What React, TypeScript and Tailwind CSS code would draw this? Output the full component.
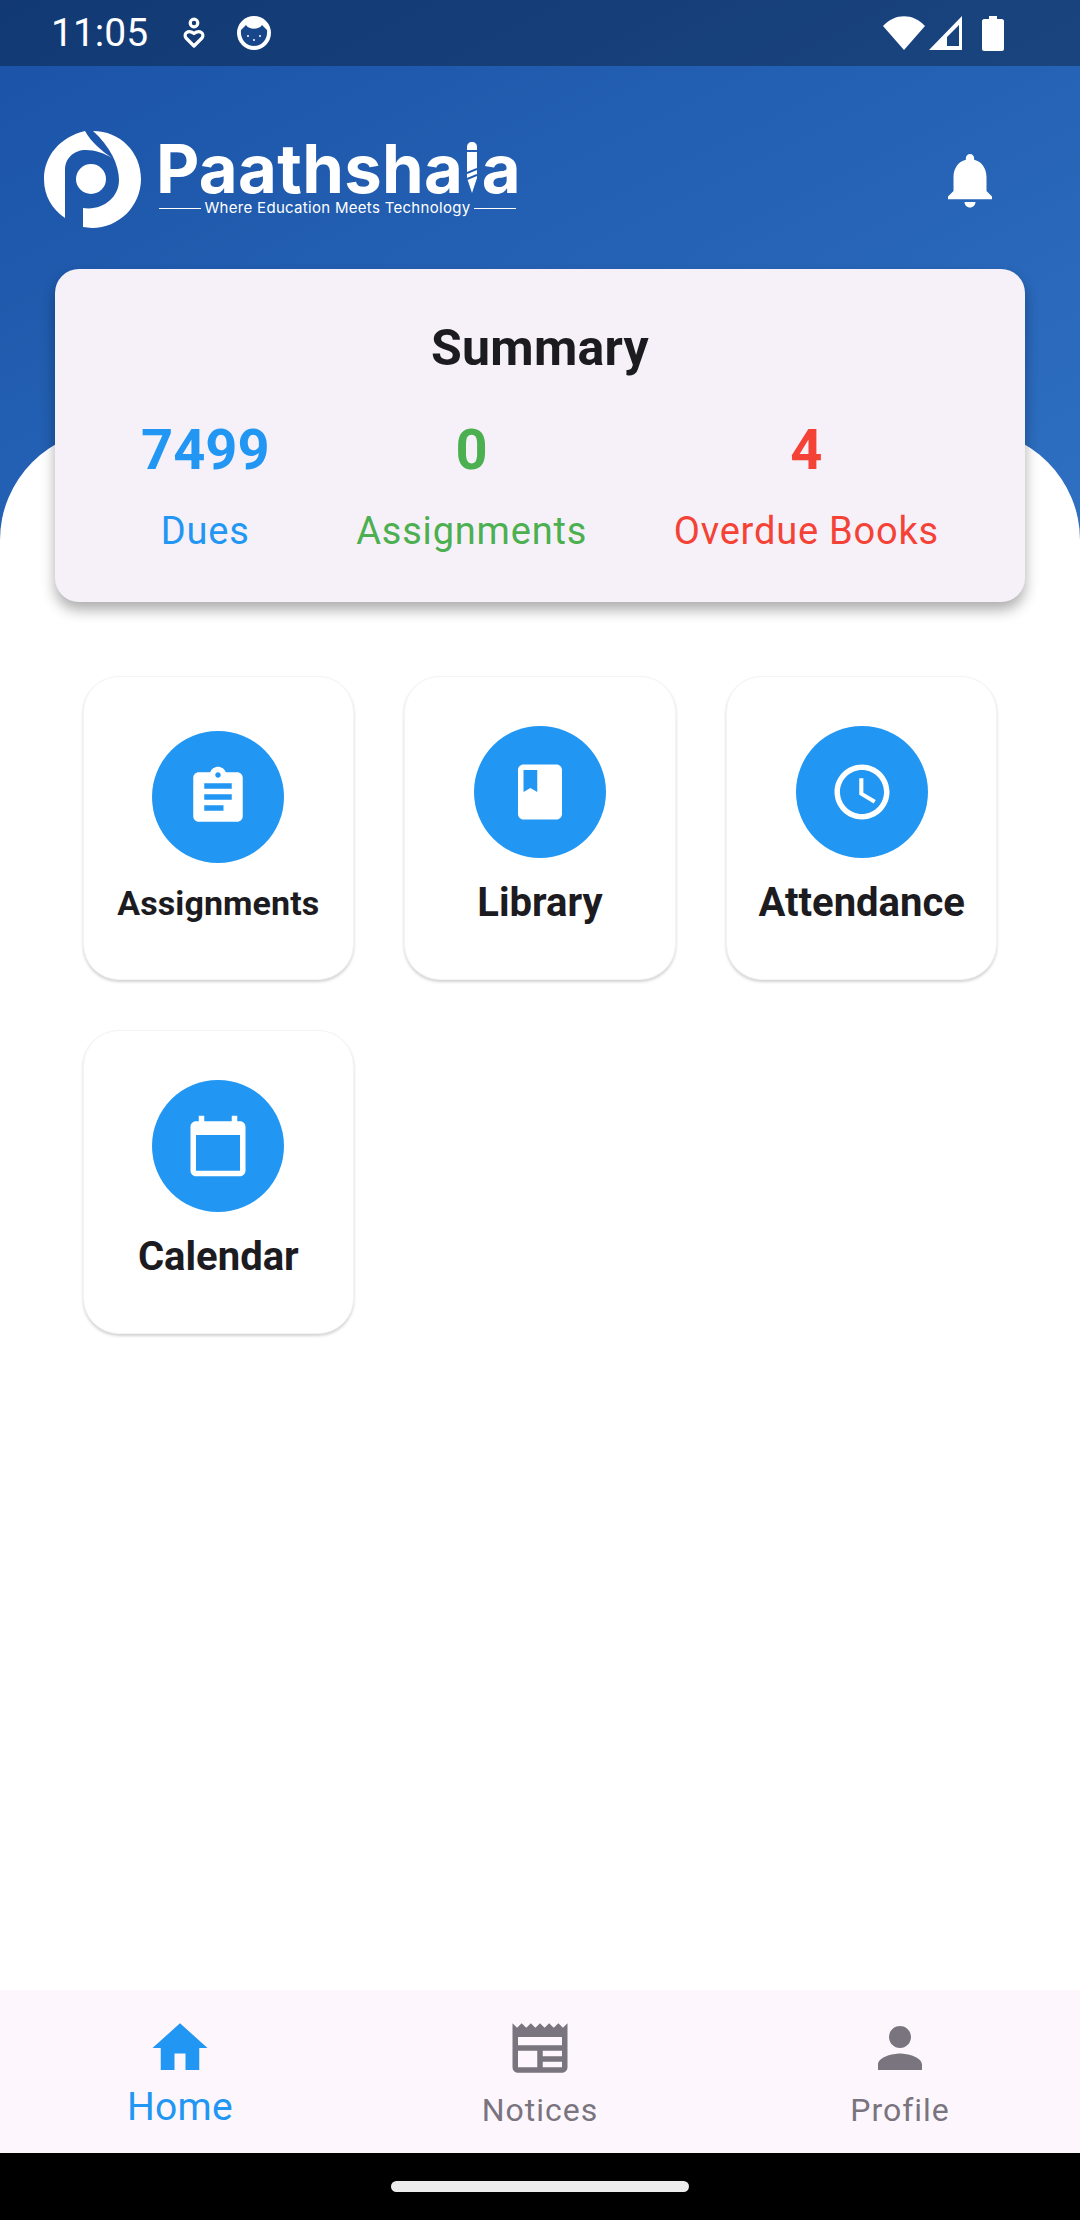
const Logo = () => (
  <div className="flex items-start">
    <svg width="98" height="98" viewBox="0 0 98 98" className="mr-[17px]">
      <path
        fill="white"
        d="M41 0 C16 6 0 25 0 48 C0 65 8 78 21 87 V39 C21 27 30 19 42 19 C51 19 60 22 68 27 C58 20 47 11 41 0 Z"
      />
      <path
        fill="white"
        d="M49 0 C76 0 97 21 97 48 C97 75 75 97 48 97 L39 96 V77 C58 80 75 67 75 49 C75 34 66 15 49 0 Z"
      />
      <circle cx="47" cy="48" r="15" fill="white" />
    </svg>
    <div className="flex flex-col w-[357px] mt-[10px]">
      <span className="-ml-[3px] text-[67px] leading-[56px] h-[56px] font-bold text-white font-['Inter',sans-serif] tracking-[0.3px] whitespace-nowrap">
        Paathsha
        <span className="relative inline-block text-transparent">
          l
          {/* le stylo qui remplace le l du logo */}
          <svg width="10" height="51" viewBox="0 0 10 51" className="absolute top-[1px] left-[4px]">
            <path fill="white" d="M0 5 C0 2 2 0 5 0 C8 0 10 2 10 5 V8 H0 Z" />
            <path fill="white" d="M0 10 H10 V36 L5 51 L0 36 Z" />
            <path stroke="#1c58ac" strokeWidth="2" d="M0 31 L10 27 M0 37 L10 33" />
          </svg>
        </span>
        a
      </span>
      <div className="flex items-center gap-[4px] mt-[3px]">
        <div className="flex-1 h-px bg-white" />
        <span className="text-[15px] leading-[16px] text-white font-['Inter',sans-serif] font-normal tracking-[0.3px] whitespace-nowrap">
          Where Education Meets Technology
        </span>
        <div className="flex-1 h-px bg-white" />
      </div>
    </div>
  </div>
);

const StatusBar = () => (
  <div className="h-[66px] bg-black/30 flex items-center pl-[51px] pr-[76px] text-white">
    <span className="text-[39px] font-normal font-['Roboto',sans-serif] w-[131px]">11:05</span>
    <svg width="24" height="32" viewBox="0 0 24 32" fill="none" stroke="white" strokeWidth="3.2">
      <circle cx="12" cy="6" r="3.8" />
      <path d="M12 29 L4 21 C1 17 6 12 12 16.5 C18 12 23 17 20 21 Z" strokeLinejoin="round" />
    </svg>
    <svg width="34" height="34" viewBox="0 0 34 34" className="ml-[31px]">
      <circle cx="17" cy="17" r="17" fill="white" />
      <path fill="#17468a" d="M4 14 L9 9 C12 14 22 14 25 9 L30 14 C31 23 25 30 17 30 C9 30 3 23 4 14 Z" />
      <circle cx="11" cy="20" r="1" fill="white" />
      <circle cx="17" cy="24" r="1" fill="white" />
      <circle cx="23" cy="20" r="1" fill="white" />
    </svg>
    <div className="ml-auto flex items-center">
      <svg width="42" height="34" viewBox="0 0 42 34">
        <path fill="white" d="M0 10 C12 -3 30 -3 42 10 L21 34 Z" />
      </svg>
      <svg width="33" height="34" viewBox="0 0 33 34" className="ml-[4px]">
        <path fill="white" fillRule="evenodd" d="M0 34 L33 0 V34 Z M18 30 H30 V9 L18 21 Z" />
      </svg>
      <svg width="22" height="35" viewBox="0 0 22 35" className="ml-[20px]">
        <path fill="white" d="M7 0 H15 V3 H20 C21 3 22 4 22 5 V33 C22 34 21 35 20 35 H2 C1 35 0 34 0 33 V5 C0 4 1 3 2 3 H7 Z" />
      </svg>
    </div>
  </div>
);

const Stat = ({ value, label, color }: { value: string; label: string; color: string }) => (
  <div className={`flex flex-col items-center ${color}`}>
    <span className="text-[56px] leading-[62px] font-bold">{value}</span>
    <span className="text-[38px] leading-[44px] mt-[28px] tracking-[0.8px]">{label}</span>
  </div>
);

const AssignmentIcon = () => (
  <svg viewBox="0 0 24 24" width="66" height="66" fill="white">
    <path d="M19 3h-4.18C14.4 1.84 13.3 1 12 1s-2.4.84-2.82 2H5c-1.1 0-2 .9-2 2v14c0 1.1.9 2 2 2h14c1.1 0 2-.9 2-2V5c0-1.1-.9-2-2-2zm-7 0c.55 0 1 .45 1 1s-.45 1-1 1-1-.45-1-1 .45-1 1-1zm2 14H7v-2h7v2zm3-4H7v-2h10v2zm0-4H7V7h10v2z" />
  </svg>
);

const BookIcon = () => (
  <svg viewBox="0 0 24 24" width="66" height="66" fill="white">
    <path d="M18 2H6c-1.1 0-2 .9-2 2v16c0 1.1.9 2 2 2h12c1.1 0 2-.9 2-2V4c0-1.1-.9-2-2-2zM6 4h5v8l-2.5-1.5L6 12V4z" />
  </svg>
);

const ClockIcon = () => (
  <svg viewBox="0 0 24 24" width="66" height="66" fill="white">
    <path d="M11.99 2C6.47 2 2 6.48 2 12s4.47 10 9.99 10C17.52 22 22 17.52 22 12S17.52 2 11.99 2zM12 20c-4.42 0-8-3.58-8-8s3.58-8 8-8 8 3.58 8 8-3.58 8-8 8zm.5-13H11v6l5.25 3.15.75-1.23-4.5-2.67z" />
  </svg>
);

const CalendarIcon = () => (
  <svg viewBox="0 0 24 24" width="66" height="66" fill="white">
    <path d="M20 3h-1V1h-2v2H7V1H5v2H4c-1.1 0-2 .9-2 2v16c0 1.1.9 2 2 2h16c1.1 0 2-.9 2-2V5c0-1.1-.9-2-2-2zm0 18H4V8h16v13z" />
  </svg>
);

const Tile = ({ icon, label, small }: { icon: React.ReactNode; label: string; small?: boolean }) => (
  <div className="h-[304px] rounded-[36px] bg-white border border-[#f5f4f5] shadow-[0_2px_3px_rgba(0,0,0,0.18)] flex flex-col items-center">
    <div
      className={`w-[132px] h-[132px] rounded-full bg-[#2196f3] flex items-center justify-center ${
        small ? 'mt-[54px]' : 'mt-[49px]'
      }`}
    >
      {icon}
    </div>
    <span
      className={
        small
          ? 'mt-[20px] text-[34px] leading-[40px] font-bold text-[#1c1b1f] tracking-[0.1px]'
          : 'mt-[22px] text-[40px] leading-[46px] font-bold text-[#1c1b1f]'
      }
    >
      {label}
    </span>
  </div>
);

const NavItem = ({
  icon,
  label,
  active,
}: {
  icon: React.ReactNode;
  label: string;
  active?: boolean;
}) => (
  <div className="flex-1 flex flex-col items-center">
    {icon}
    <span
      className={
        active
          ? 'text-[39px] leading-[44px] mt-[4px] text-[#2196f3] tracking-[0.3px]'
          : 'text-[32px] leading-[38px] mt-[10px] text-[#79747e] tracking-[1px]'
      }
    >
      {label}
    </span>
  </div>
);

export default function App() {
  return (
    <div className="w-[1080px] h-[2220px] flex flex-col bg-white overflow-hidden font-['Roboto',sans-serif]">
      <div className="h-[540px] bg-gradient-to-br from-[#1a52a6] to-[#2f70c2] shrink-0 flex flex-col">
        <StatusBar />
        <div className="flex items-start justify-between pl-[44px] pr-[77px] pt-[65px]">
          <Logo />
          <svg viewBox="0 0 24 24" width="66" height="66" fill="white" className="-mt-[1px] translate-y-[17px]">
            <path d="M12 22c1.1 0 2-.9 2-2h-4c0 1.1.89 2 2 2zm6-6v-5c0-3.07-1.64-5.64-4.5-6.32V4c0-.83-.67-1.5-1.5-1.5s-1.5.67-1.5 1.5v.68C7.63 5.36 6 7.92 6 11v5l-2 2v1h16v-1l-2-2z" />
          </svg>
        </div>
      </div>

      <div className="relative -mt-[110px] bg-white rounded-t-[110px] flex-1 flex flex-col">
        {/* carte résumé par dessus le bandeau */}
        <div className="relative z-10 -mt-[161px] mx-[55px] h-[333px] rounded-[24px] bg-[#f6f1f9] shadow-[0_8px_14px_rgba(0,0,0,0.32)] flex flex-col items-center">
          <h2 className="mt-[51px] text-[50px] leading-[56px] font-bold text-[#1c1b1f] tracking-[0.3px]">Summary</h2>
          <div className="mt-[43px] w-full px-[86px] flex justify-between">
            <Stat value="7499" label="Dues" color="text-[#2196f3]" />
            <Stat value="0" label="Assignments" color="text-[#4caf50]" />
            <Stat value="4" label="Overdue Books" color="text-[#f44336]" />
          </div>
        </div>

        <div className="grid grid-cols-3 gap-[50px] px-[82.5px] mt-[74px]">
          <Tile icon={<AssignmentIcon />} label="Assignments" small />
          <Tile icon={<BookIcon />} label="Library" />
          <Tile icon={<ClockIcon />} label="Attendance" />
          <Tile icon={<CalendarIcon />} label="Calendar" />
        </div>
      </div>

      <nav className="h-[163px] shrink-0 bg-[#fdf7fd] flex items-start pt-[31px] shadow-[0_-1px_2px_rgba(0,0,0,0.04)]">
        <NavItem
          active
          label="Home"
          icon={
            <svg viewBox="0 0 24 24" width="66" height="66" fill="#2196f3" className="-mt-[6px]">
              <path d="M10 20v-6h4v6h5v-8h3L12 3 2 12h3v8z" />
            </svg>
          }
        />
        <NavItem
          label="Notices"
          icon={
            <svg viewBox="0 0 24 24" width="66" height="66" fill="#79747e" className="-mt-[6px]">
              <path d="M22 3l-1.67 1.67L18.67 3 17 4.67 15.33 3l-1.66 1.67L12 3l-1.67 1.67L8.67 3 7 4.67 5.33 3 3.67 4.67 2 3v16c0 1.1.9 2 2 2h16c1.1 0 2-.9 2-2V3zM11 19H4v-6h7v6zm9 0h-7v-2h7v2zm0-4h-7v-2h7v2zm0-4H4V8h16v3z" />
            </svg>
          }
        />
        <NavItem
          label="Profile"
          icon={
            <svg viewBox="0 0 24 24" width="66" height="66" fill="#79747e" className="-mt-[6px]">
              <path d="M12 12c2.21 0 4-1.79 4-4s-1.79-4-4-4-4 1.79-4 4 1.79 4 4 4zm0 2c-2.67 0-8 1.34-8 4v2h16v-2c0-2.66-5.33-4-8-4z" />
            </svg>
          }
        />
      </nav>

      <div className="h-[67px] shrink-0 bg-black flex items-center justify-center">
        <div className="w-[298px] h-[11px] rounded-full bg-[#ececec]" />
      </div>
    </div>
  );
}
